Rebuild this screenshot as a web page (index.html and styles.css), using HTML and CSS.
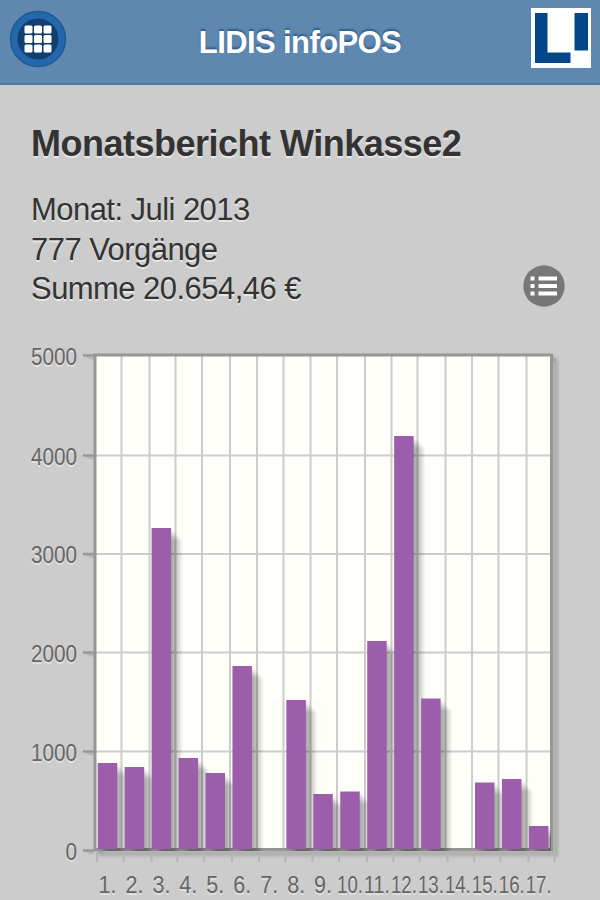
FILE: index.html
```html
<!DOCTYPE html>
<html lang="de">
<head>
    <meta charset="utf-8">
    <title>LIDIS infoPOS</title>
    <link rel="stylesheet" href="styles.css">
</head>
<body>
    <header class="header">
        <button class="menu-btn" aria-label="Menü">
            <svg width="58" height="58" viewBox="0 0 58 58">
                <circle cx="29" cy="29" r="27.5" fill="#2368ad" stroke="#215a8c" stroke-width="1.5"/>
                <circle cx="29" cy="29" r="20.5" fill="#123f70"/>
                <g fill="#fff">
                    <rect x="15.5" y="15.5" width="8" height="8" rx="1.5"/>
                    <rect x="25" y="15.5" width="8" height="8" rx="1.5"/>
                    <rect x="34.5" y="15.5" width="8" height="8" rx="1.5"/>
                    <rect x="15.5" y="25" width="8" height="8" rx="1.5"/>
                    <rect x="25" y="25" width="8" height="8" rx="1.5"/>
                    <rect x="34.5" y="25" width="8" height="8" rx="1.5"/>
                    <rect x="15.5" y="34.5" width="8" height="8" rx="1.5"/>
                    <rect x="25" y="34.5" width="8" height="8" rx="1.5"/>
                    <rect x="34.5" y="34.5" width="8" height="8" rx="1.5"/>
                </g>
            </svg>
        </button>
        <h1 class="title">LIDIS infoPOS</h1>
        <svg class="logo" width="60" height="60" viewBox="0 0 60 60">
            <rect width="60" height="60" fill="#fff"/>
            <path d="M4 5h12.5v39.5h23V55H4zM43.5 5H57v37.5H43.5z" fill="#04468a"/>
        </svg>
    </header>

    <main class="content">
        <h2>Monatsbericht Winkasse2</h2>
        <div class="summary">
            <p>Monat: Juli 2013<br>777 Vorgänge<br>Summe 20.654,46 €</p>
            <button class="list-btn" aria-label="Liste">
                <svg width="42" height="42" viewBox="0 0 42 42">
                    <circle cx="21" cy="21" r="20.7" fill="#777"/>
                    <path d="M7.5 11.5h4v4h-4zM15.5 11.5H34v4H15.5zM7.5 19h4v4h-4zM15.5 19H34v4H15.5zM7.5 26.5h4v4h-4zM15.5 26.5H34v4H15.5z" fill="#fff"/>
                </svg>
            </button>
        </div>
    </main>

    <svg class="chart" width="600" height="570" viewBox="0 330 600 570">
        <defs>
            <clipPath id="plot"><rect x="96" y="356" width="455" height="495"/></clipPath>
            <filter id="soft" x="-20%" y="-5%" width="140%" height="110%"><feGaussianBlur stdDeviation="0.9"/></filter>
        </defs>
        <g id="frame-shadow" class="frame-shadow" filter="url(#soft)"></g>
        <rect x="95" y="355" width="456.5" height="495" fill="#fffffa"/>
        <g id="grid" class="grid"></g>
        <rect class="frame" x="95" y="355" width="456.5" height="494.5"/>
        <g id="bars" clip-path="url(#plot)"></g>
        <g id="labels" class="labels"></g>
    </svg>

    <script>
        const tops = [763, 767, 528, 758, 773, 666, null, 700, 794, 791.5, 641, 436, 698.5, null, 782.5, 779, 826];
        const gridX = [121.5, 149.5, 175.5, 202, 230, 257, 283.5, 310.5, 337, 365, 391.5, 417.5, 445.5, 472, 498.5, 526.5];
        const gridY = [355.5, 455.5, 554, 652.5, 751.5, 850.5];
        const bottom = 849;

        // grid lines and ticks
        let grid = '';
        let ticks = '';
        gridX.forEach(x => {
            grid += `<line x1="${x}" x2="${x}" y1="356" y2="849"/>`;
        });
        gridY.slice(1, 5).forEach(y => {
            grid += `<line x1="96" x2="550" y1="${y}" y2="${y}"/>`;
        });
        [95, ...gridX, 552.5].forEach(x => {
            ticks += `<line class="tick" x1="${x + 2}" x2="${x + 2}" y1="851" y2="862"/>`;
        });
        gridY.forEach(y => {
            ticks += `<path class="y-tick-shadow" d="M85 ${y + 1}H94V${y + 4}H90z"/>`;
            ticks += `<line class="y-tick" x1="83" x2="95" y1="${y}" y2="${y}"/>`;
        });
        document.getElementById('grid').innerHTML = grid + ticks;

        // shadow behind the plot frame
        let shadow = '';
        for (let i = 1; i <= 4; i++) {
            shadow += `<rect x="${95 + i * 1.5}" y="${355 + i * 1.5}" width="456.5" height="494.5"/>`;
        }
        document.getElementById('frame-shadow').innerHTML = shadow;

        // bars, each one over the shadow of the previous
        let bars = '';
        tops.forEach((y, i) => {
            if (y === null) return;
            const x = 97.7 + i * 26.95;
            const h = bottom - y;
            bars += '<g filter="url(#soft)">';
            for (let s = 1; s <= 5; s++) {
                bars += `<rect class="bar-shadow" x="${x + s * 2.1}" y="${y + s * 2.3}" width="19.5" height="${h}"/>`;
            }
            bars += `</g><rect class="bar" x="${x}" y="${y}" width="19.5" height="${h}"/>`;
        });
        document.getElementById('bars').innerHTML = bars;

        let labels = '';
        gridY.forEach((y, i) => {
            const value = String(5000 - i * 1000);
            const w = value.length * 11.5;
            labels += `<text x="${77 - w}" y="${y + 9}" textLength="${w}" lengthAdjust="spacingAndGlyphs">${value}</text>`;
        });
        tops.forEach((y, i) => {
            const w = i < 9 ? 18 : 25.9;
            labels += `<text x="${107.5 + i * 26.95 - w / 2}" y="893" textLength="${w}" lengthAdjust="spacingAndGlyphs">${i + 1}.</text>`;
        });
        document.getElementById('labels').innerHTML = labels;
    </script>
</body>
</html>
```

FILE: styles.css
```css
body { margin: 0; height: 900px; overflow: hidden; background: #ccc; color: #333; font-family: "Liberation Sans", Arial, sans-serif; }
button { padding: 0; border: none; background: none; cursor: pointer; }
svg { display: block; }
.header { box-sizing: border-box; height: 85px; padding: 8px 9px 0 9px; display: flex; justify-content: space-between; align-items: flex-start; background: #5e88b0; border-bottom: 2px solid #4f779f; }
.menu-btn { width: 58px; height: 58px; margin-top: 2px; }
.title { margin: 17px 0 0 2px; font-size: 31px; line-height: 36px; letter-spacing: -0.6px; color: #fff; text-shadow: 0 -2px 2px #315d88; }
.content { height: 245px; box-sizing: border-box; padding: 38px 35px 0 31px; text-shadow: 0 2px 0 #e6e6e6; }
h2 { margin: 0; font-size: 36px; line-height: 42px; letter-spacing: -0.5px; white-space: nowrap; }
.summary { display: flex; justify-content: space-between; align-items: flex-end; margin-top: 25px; }
.summary p { margin: 0; font-size: 31px; line-height: 39.5px; letter-spacing: -0.55px; }
.list-btn { margin-bottom: 2px; }
.chart { overflow: hidden; }
.grid line { stroke: #ccc; stroke-width: 2; }
.grid .tick { stroke: #b5b5b5; }
.grid .y-tick { stroke: #999; stroke-width: 2.5; }
.y-tick-shadow { fill: #b8b8b8; }
.frame { fill: none; stroke: #969694; stroke-width: 3; }
.frame-shadow rect { fill: none; stroke: #000; stroke-opacity: 0.075; stroke-width: 3; }
.bar { fill: #9c5eab; }
.bar-shadow { fill: #000; fill-opacity: 0.08; }
.labels { fill: #666; font-size: 23px; text-shadow: 0 2px 0 #e0e0e0; }
```
